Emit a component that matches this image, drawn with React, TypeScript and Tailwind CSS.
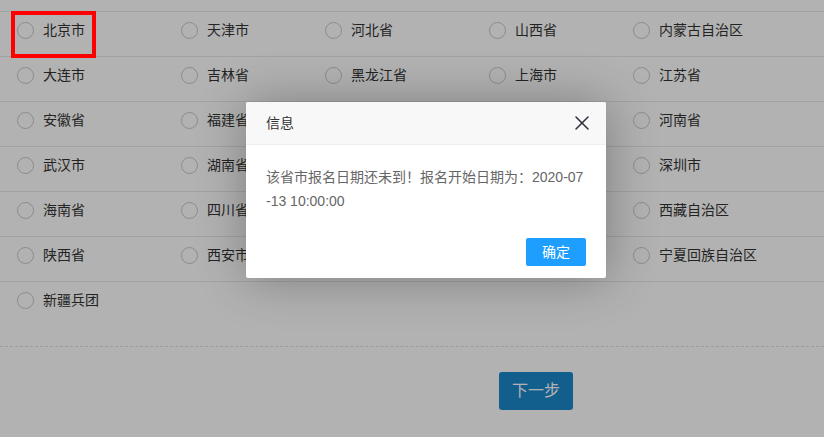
import { X } from "lucide-react";

const rows: string[][] = [
  ["北京市", "天津市", "河北省", "山西省", "内蒙古自治区"],
  ["大连市", "吉林省", "黑龙江省", "上海市", "江苏省"],
  ["安徽省", "福建省", "江西省", "山东省", "河南省"],
  ["武汉市", "湖南省", "广东省", "云南省", "深圳市"],
  ["海南省", "四川省", "重庆市", "贵州省", "西藏自治区"],
  ["陕西省", "西安市", "甘肃省", "青海省", "宁夏回族自治区"],
  ["新疆兵团"],
];

const RegionOption = ({ name }: { name: string }) => (
  <label className="flex items-center gap-[9px] h-[20px] cursor-pointer">
    <span className="w-[17px] h-[17px] rounded-full border border-[#c8c8c8] bg-white shrink-0" />
    <span className="text-[14px] leading-[20px] text-[#333] whitespace-nowrap">{name}</span>
  </label>
);

const App = () => {
  return (
    <div className="relative w-[824px] h-[437px] overflow-hidden bg-white font-['Liberation_Sans','Noto_Sans_CJK_SC',sans-serif]">
      {/* region list */}
      <div className="h-[12px] border-b border-[#e8e8e8]" />
      {rows.map((row, i) => (
        <div
          key={i}
          className={`h-[45px] pt-[8px] pl-[17px] grid grid-cols-[164px_144px_164px_144px_1fr] ${
            i < rows.length - 1 ? "border-b border-[#e8e8e8]" : ""
          }`}
        >
          {row.map((name) => (
            <RegionOption key={name} name={name} />
          ))}
        </div>
      ))}
      <div className="mt-[19px] border-t border-dashed border-[#e0e0e0]" />
      <div className="mt-[25px] pl-[499px]">
        <button className="w-[74px] h-[38px] rounded-[3px] bg-[#1b88cc] text-white text-[16px]">
          下一步
        </button>
      </div>

      {/* mask */}
      <div className="absolute inset-0 bg-black/30" />

      {/* highlight around the selected item */}
      <div className="absolute left-[11px] top-[11px] w-[85px] h-[47px] border-[4px] border-[#ff0000]" />

      {/* dialog */}
      <div className="absolute left-[246px] top-[102px] w-[360px] bg-white rounded-[2px] shadow-[1px_1px_50px_rgba(0,0,0,0.3)]">
        <div className="relative h-[43px] pl-[20px] pr-[80px] leading-[42px] text-[14px] text-[#333] bg-[#f8f8f8] border-b border-[#eee] rounded-t-[2px]">
          信息
          <X className="absolute right-[12px] top-[9px] w-[24px] h-[24px] text-[#2e2e3a]" strokeWidth={1.5} />
        </div>
        <div className="p-[20px] text-[14px] leading-[24px] text-[#666] break-all">
          该省市报名日期还未到！报名开始日期为：2020-07-13 10:00:00
        </div>
        <div className="flex justify-end px-[15px] pb-[12px]">
          <button className="mt-[5px] mx-[5px] h-[28px] px-[15px] border border-[#1e9fff] bg-[#1e9fff] text-white text-[14px] leading-[26px] rounded-[2px]">
            确定
          </button>
        </div>
      </div>
    </div>
  );
};

export default App;
